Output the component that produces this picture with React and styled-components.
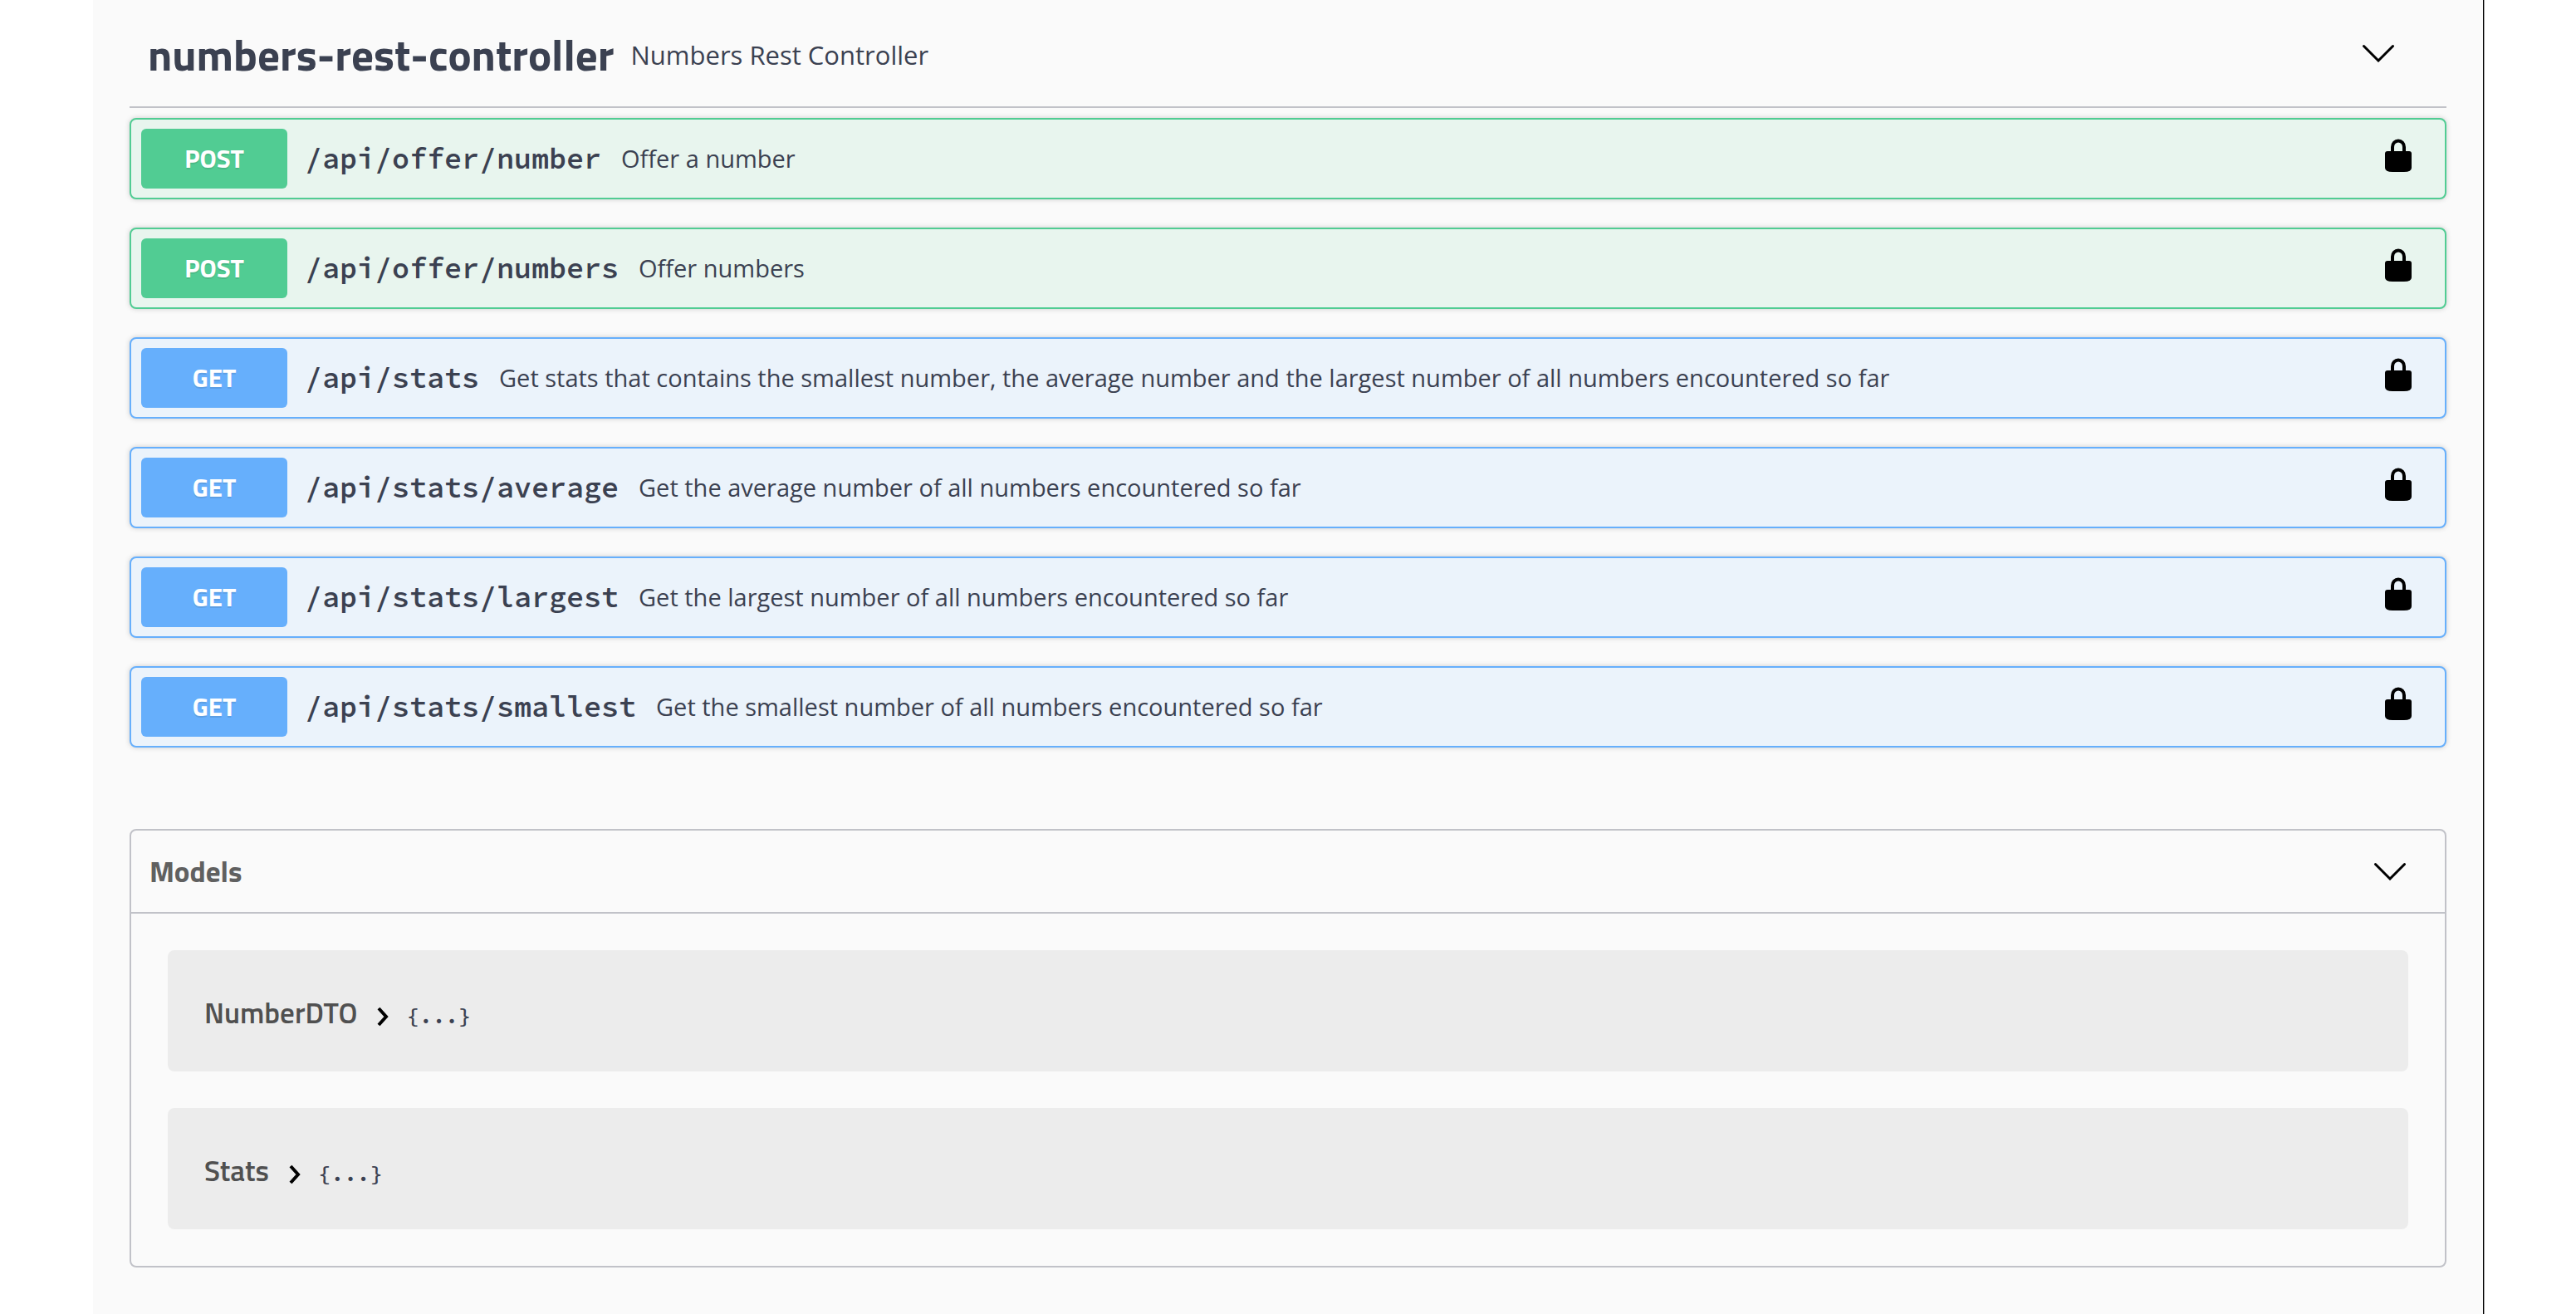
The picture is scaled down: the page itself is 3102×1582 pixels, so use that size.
import React from "react";
import styled, { createGlobalStyle } from "styled-components";

const Global = createGlobalStyle`
  *, *::before, *::after { box-sizing: border-box; }
  body { margin: 0; background: #ffffff; }
`;

const heading = `"Titillium Web", Roboto, "Open Sans", sans-serif`;
const sans = `"Open Sans", "Noto Sans", sans-serif`;
const mono = `"Source Code Pro", "Liberation Mono", monospace`;

const palette = {
  post: { main: "#51cc93", tint: "#e8f5ee" },
  get: { main: "#66affc", tint: "#ebf3fb" },
};

const Page = styled.main`
  min-height: 100vh;
  margin: 0 111px 0 112px;
  padding: 0 44px 56px;
  background: #fafafa;
  border-right: 1px solid #000000;
  box-shadow: 1px 0 0 #a0a0a0;
  color: #3b4151;
`;

const TagHeader = styled.header`
  display: flex;
  align-items: center;
  height: 130px;
  padding: 0 62px 0 22px;
  border-bottom: 2px solid #c1c2c8;
`;

const TagName = styled.h2`
  margin: 0;
  padding-top: 4px;
  font: 700 53px/64px ${heading};
`;

const TagNote = styled.small`
  flex: 1;
  padding: 4px 0 0 20px;
  font: 400 31px/42px ${sans};
`;

const IconButton = styled.button`
  display: flex;
  padding: 0;
  border: 0;
  background: none;
  color: #000000;
  cursor: pointer;
`;

const Operations = styled.ul`
  display: grid;
  gap: 34px;
  margin: 0;
  padding: 12px 0 0;
  list-style: none;
`;

const Operation = styled.li`
  display: flex;
  align-items: center;
  height: 98px;
  padding: 0 40px 0 12px;
  border: 2px solid ${(p) => palette[p.$method].main};
  border-radius: 8px;
  background: ${(p) => palette[p.$method].tint};
  box-shadow: 0 0 6px rgba(0, 0, 0, 0.19);
`;

const Method = styled.span`
  width: 176px;
  border-radius: 6px;
  background: ${(p) => palette[p.$method].main};
  color: #ffffff;
  font: 700 31px/72px ${heading};
  text-align: center;
  text-shadow: 0 2px 0 rgba(0, 0, 0, 0.1);
`;

const Path = styled.a`
  padding: 0 24px 0 21px;
  color: inherit;
  font: 600 35px/48px ${mono};
  text-decoration: none;
`;

const Summary = styled.span`
  flex: 1;
  font: 400 29px/40px ${sans};
`;

const LockButton = styled(IconButton)`
  padding-bottom: 8px;
`;

const Models = styled.section`
  margin-top: 98px;
  border: 2px solid #c1c2c8;
  border-radius: 8px;
`;

const ModelsHeader = styled.header`
  display: flex;
  align-items: center;
  justify-content: space-between;
  height: 100px;
  padding: 0 46px 0 22px;
  border-bottom: 2px solid #c1c2c8;
`;

const ModelsTitle = styled.h3`
  margin: 0;
  color: #606060;
  font: 700 35px/44px ${heading};
`;

const ModelList = styled.div`
  display: grid;
  gap: 44px;
  padding: 44px;
`;

const Model = styled.div`
  display: flex;
  align-items: baseline;
  padding: 53px 44px 49px;
  border-radius: 8px;
  background: #ececec;
`;

const ModelName = styled.span`
  color: #505050;
  font: 600 35px/44px ${heading};
`;

const ModelToggle = styled(IconButton)`
  padding: 0 21px 0 22px;
`;

const Braces = styled.span`
  font: 600 26px/36px ${mono};
`;

const ChevronDown = () => (
  <svg width="40" height="22" viewBox="0 0 40 22" fill="none" stroke="currentColor" strokeWidth="3" strokeLinecap="round" aria-hidden="true">
    <path d="M2.500 2.500 20 20 37.500 2.500" />
  </svg>
);

const ChevronRight = () => (
  <svg width="16" height="19" viewBox="0 0 16 19" fill="none" stroke="currentColor" strokeWidth="4" overflow="visible" aria-hidden="true">
    <path d="M4 1 13 11 4 21" />
  </svg>
);

const Lock = () => (
  <svg width="32" height="40" viewBox="0 0 32 40" aria-hidden="true">
    <path d="M9 17V10a7 7.500 0 0 1 14 0v7" fill="none" stroke="currentColor" strokeWidth="4" />
    <path d="M3 15h26q3 0 3 3v17q0 5-9 5H9q-9 0-9-5V18q0-3 3-3z" fill="currentColor" />
  </svg>
);

const operations = [
  ["post", "/api/offer/number", "Offer a number"],
  ["post", "/api/offer/numbers", "Offer numbers"],
  ["get", "/api/stats", "Get stats that contains the smallest number, the average number and the largest number of all numbers encountered so far"],
  ["get", "/api/stats/average", "Get the average number of all numbers encountered so far"],
  ["get", "/api/stats/largest", "Get the largest number of all numbers encountered so far"],
  ["get", "/api/stats/smallest", "Get the smallest number of all numbers encountered so far"],
];

const models = ["NumberDTO", "Stats"];

export default function App() {
  return (
    <>
      <Global />
      <Page>
        <TagHeader>
          <TagName>numbers-rest-controller</TagName>
          <TagNote>Numbers Rest Controller</TagNote>
          <IconButton aria-label="Collapse operations"><ChevronDown /></IconButton>
        </TagHeader>
        <Operations>
          {operations.map(([method, path, summary]) => (
            <Operation key={path} $method={method}>
              <Method $method={method}>{method.toUpperCase()}</Method>
              <Path href={"#" + path}>{path}</Path>
              <Summary>{summary}</Summary>
              <LockButton aria-label="Authorize"><Lock /></LockButton>
            </Operation>
          ))}
        </Operations>
        <Models>
          <ModelsHeader>
            <ModelsTitle>Models</ModelsTitle>
            <IconButton aria-label="Collapse models"><ChevronDown /></IconButton>
          </ModelsHeader>
          <ModelList>
            {models.map((name) => (
              <Model key={name}>
                <ModelName>{name}</ModelName>
                <ModelToggle aria-label={"Expand " + name}><ChevronRight /></ModelToggle>
                <Braces>{"{...}"}</Braces>
              </Model>
            ))}
          </ModelList>
        </Models>
      </Page>
    </>
  );
}
